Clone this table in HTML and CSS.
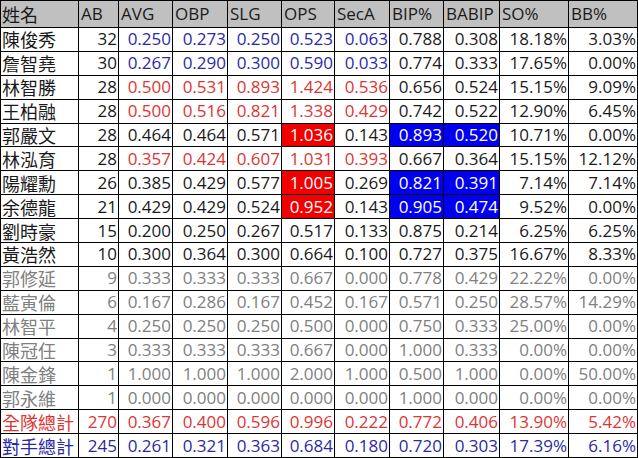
FILE: index.html
```html
<!DOCTYPE html>
<html lang="zh-Hant">
<head>
    <meta charset="UTF-8">
    <title>打擊成績</title>
    <link rel="stylesheet" href="styles.css">
</head>
<body>
    <table class="stats">
        <colgroup>
            <col class="c-name">
            <col class="c-ab">
            <col class="c-avg">
            <col class="c-obp">
            <col class="c-slg">
            <col class="c-ops">
            <col class="c-seca">
            <col class="c-bip">
            <col class="c-babip">
            <col class="c-so">
            <col class="c-bb">
        </colgroup>
        <tr class="cabecera">
            <th class="nombre">姓名</th><th>AB</th><th>AVG</th><th>OBP</th><th>SLG</th><th>OPS</th><th>SecA</th><th>BIP%</th><th>BABIP</th><th>SO%</th><th>BB%</th>
        </tr>
        <tr>
            <td class="nombre">陳俊秀</td><td>32</td><td class="azul">0.250</td><td class="azul">0.273</td><td class="azul">0.250</td><td class="azul">0.523</td><td class="azul">0.063</td><td>0.788</td><td>0.308</td><td>18.18%</td><td>3.03%</td>
        </tr>
        <tr>
            <td class="nombre">詹智堯</td><td>30</td><td class="azul">0.267</td><td class="azul">0.290</td><td class="azul">0.300</td><td class="azul">0.590</td><td class="azul">0.033</td><td>0.774</td><td>0.333</td><td>17.65%</td><td>0.00%</td>
        </tr>
        <tr>
            <td class="nombre">林智勝</td><td>28</td><td class="rojo">0.500</td><td class="rojo">0.531</td><td class="rojo">0.893</td><td class="rojo">1.424</td><td class="rojo">0.536</td><td>0.656</td><td>0.524</td><td>15.15%</td><td>9.09%</td>
        </tr>
        <tr>
            <td class="nombre">王柏融</td><td>28</td><td class="rojo">0.500</td><td class="rojo">0.516</td><td class="rojo">0.821</td><td class="rojo">1.338</td><td class="rojo">0.429</td><td>0.742</td><td>0.522</td><td>12.90%</td><td>6.45%</td>
        </tr>
        <tr>
            <td class="nombre">郭嚴文</td><td>28</td><td>0.464</td><td>0.464</td><td>0.571</td><td class="fondo-rojo">1.036</td><td>0.143</td><td class="fondo-azul">0.893</td><td class="fondo-azul">0.520</td><td>10.71%</td><td>0.00%</td>
        </tr>
        <tr>
            <td class="nombre">林泓育</td><td>28</td><td class="rojo">0.357</td><td class="rojo">0.424</td><td class="rojo">0.607</td><td class="rojo">1.031</td><td class="rojo">0.393</td><td>0.667</td><td>0.364</td><td>15.15%</td><td>12.12%</td>
        </tr>
        <tr>
            <td class="nombre">陽耀勳</td><td>26</td><td>0.385</td><td>0.429</td><td>0.577</td><td class="fondo-rojo">1.005</td><td>0.269</td><td class="fondo-azul">0.821</td><td class="fondo-azul">0.391</td><td>7.14%</td><td>7.14%</td>
        </tr>
        <tr>
            <td class="nombre">余德龍</td><td>21</td><td>0.429</td><td>0.429</td><td>0.524</td><td class="fondo-rojo">0.952</td><td>0.143</td><td class="fondo-azul">0.905</td><td class="fondo-azul">0.474</td><td>9.52%</td><td>0.00%</td>
        </tr>
        <tr>
            <td class="nombre">劉時豪</td><td>15</td><td>0.200</td><td>0.250</td><td>0.267</td><td>0.517</td><td>0.133</td><td>0.875</td><td>0.214</td><td>6.25%</td><td>6.25%</td>
        </tr>
        <tr>
            <td class="nombre">黃浩然</td><td>10</td><td>0.300</td><td>0.364</td><td>0.300</td><td>0.664</td><td>0.100</td><td>0.727</td><td>0.375</td><td>16.67%</td><td>8.33%</td>
        </tr>
        <tr class="gris">
            <td class="nombre">郭修延</td><td>9</td><td>0.333</td><td>0.333</td><td>0.333</td><td>0.667</td><td>0.000</td><td>0.778</td><td>0.429</td><td>22.22%</td><td>0.00%</td>
        </tr>
        <tr class="gris">
            <td class="nombre">藍寅倫</td><td>6</td><td>0.167</td><td>0.286</td><td>0.167</td><td>0.452</td><td>0.167</td><td>0.571</td><td>0.250</td><td>28.57%</td><td>14.29%</td>
        </tr>
        <tr class="gris">
            <td class="nombre">林智平</td><td>4</td><td>0.250</td><td>0.250</td><td>0.250</td><td>0.500</td><td>0.000</td><td>0.750</td><td>0.333</td><td>25.00%</td><td>0.00%</td>
        </tr>
        <tr class="gris">
            <td class="nombre">陳冠任</td><td>3</td><td>0.333</td><td>0.333</td><td>0.333</td><td>0.667</td><td>0.000</td><td>1.000</td><td>0.333</td><td>0.00%</td><td>0.00%</td>
        </tr>
        <tr class="gris">
            <td class="nombre">陳金鋒</td><td>1</td><td>1.000</td><td>1.000</td><td>1.000</td><td>2.000</td><td>1.000</td><td>0.500</td><td>1.000</td><td>0.00%</td><td>50.00%</td>
        </tr>
        <tr class="gris">
            <td class="nombre">郭永維</td><td>1</td><td>0.000</td><td>0.000</td><td>0.000</td><td>0.000</td><td>0.000</td><td>1.000</td><td>0.000</td><td>0.00%</td><td>0.00%</td>
        </tr>
        <tr class="fila-roja">
            <td class="nombre">全隊總計</td><td>270</td><td>0.367</td><td>0.400</td><td>0.596</td><td>0.996</td><td>0.222</td><td>0.772</td><td>0.406</td><td>13.90%</td><td>5.42%</td>
        </tr>
        <tr class="fila-azul">
            <td class="nombre">對手總計</td><td>245</td><td>0.261</td><td>0.321</td><td>0.363</td><td>0.684</td><td>0.180</td><td>0.720</td><td>0.303</td><td>17.39%</td><td>6.16%</td>
        </tr>
    </table>
</body>
</html>
```
FILE: styles.css
```css
body {
    margin: 0;
    background-color: white;
    font-family: "Open Sans", "Noto Sans CJK TC", sans-serif;
    font-size: 17px;
    color: #1a1a1a;
}

.stats {
    width: 638px;
    table-layout: fixed;
    border-collapse: collapse;
}

.c-name { width: 78px; }
.c-ab { width: 40px; }
.c-avg { width: 54px; }
.c-obp { width: 55px; }
.c-slg { width: 54px; }
.c-ops { width: 53px; }
.c-seca { width: 55px; }
.c-bip { width: 54px; }
.c-babip { width: 56px; }
.c-so { width: 69px; }
.c-bb { width: 69px; }

th, td {
    border: 1px solid black;
    padding: 0 1px 0 2px;
    white-space: nowrap;
    overflow: hidden;
}

th {
    height: 26px;
    line-height: 26px;
    text-align: left;
    font-weight: normal;
    background-color: #c0c0c0;
}

td {
    height: 22.9px;
    line-height: 22px;
    text-align: right;
}

td.nombre, th.nombre {
    text-align: left;
    font-family: "Noto Sans CJK TC", sans-serif;
    font-size: 18px;
    padding-left: 1px;
}

.azul, .fila-azul td { color: #2a2aa8; }

.rojo, .fila-roja td { color: #dc3535; }

.gris td { color: #808080; }

.fondo-rojo {
    background-color: #f20000;
    color: white;
}

.fondo-azul {
    background-color: #0000ee;
    color: white;
}
```
